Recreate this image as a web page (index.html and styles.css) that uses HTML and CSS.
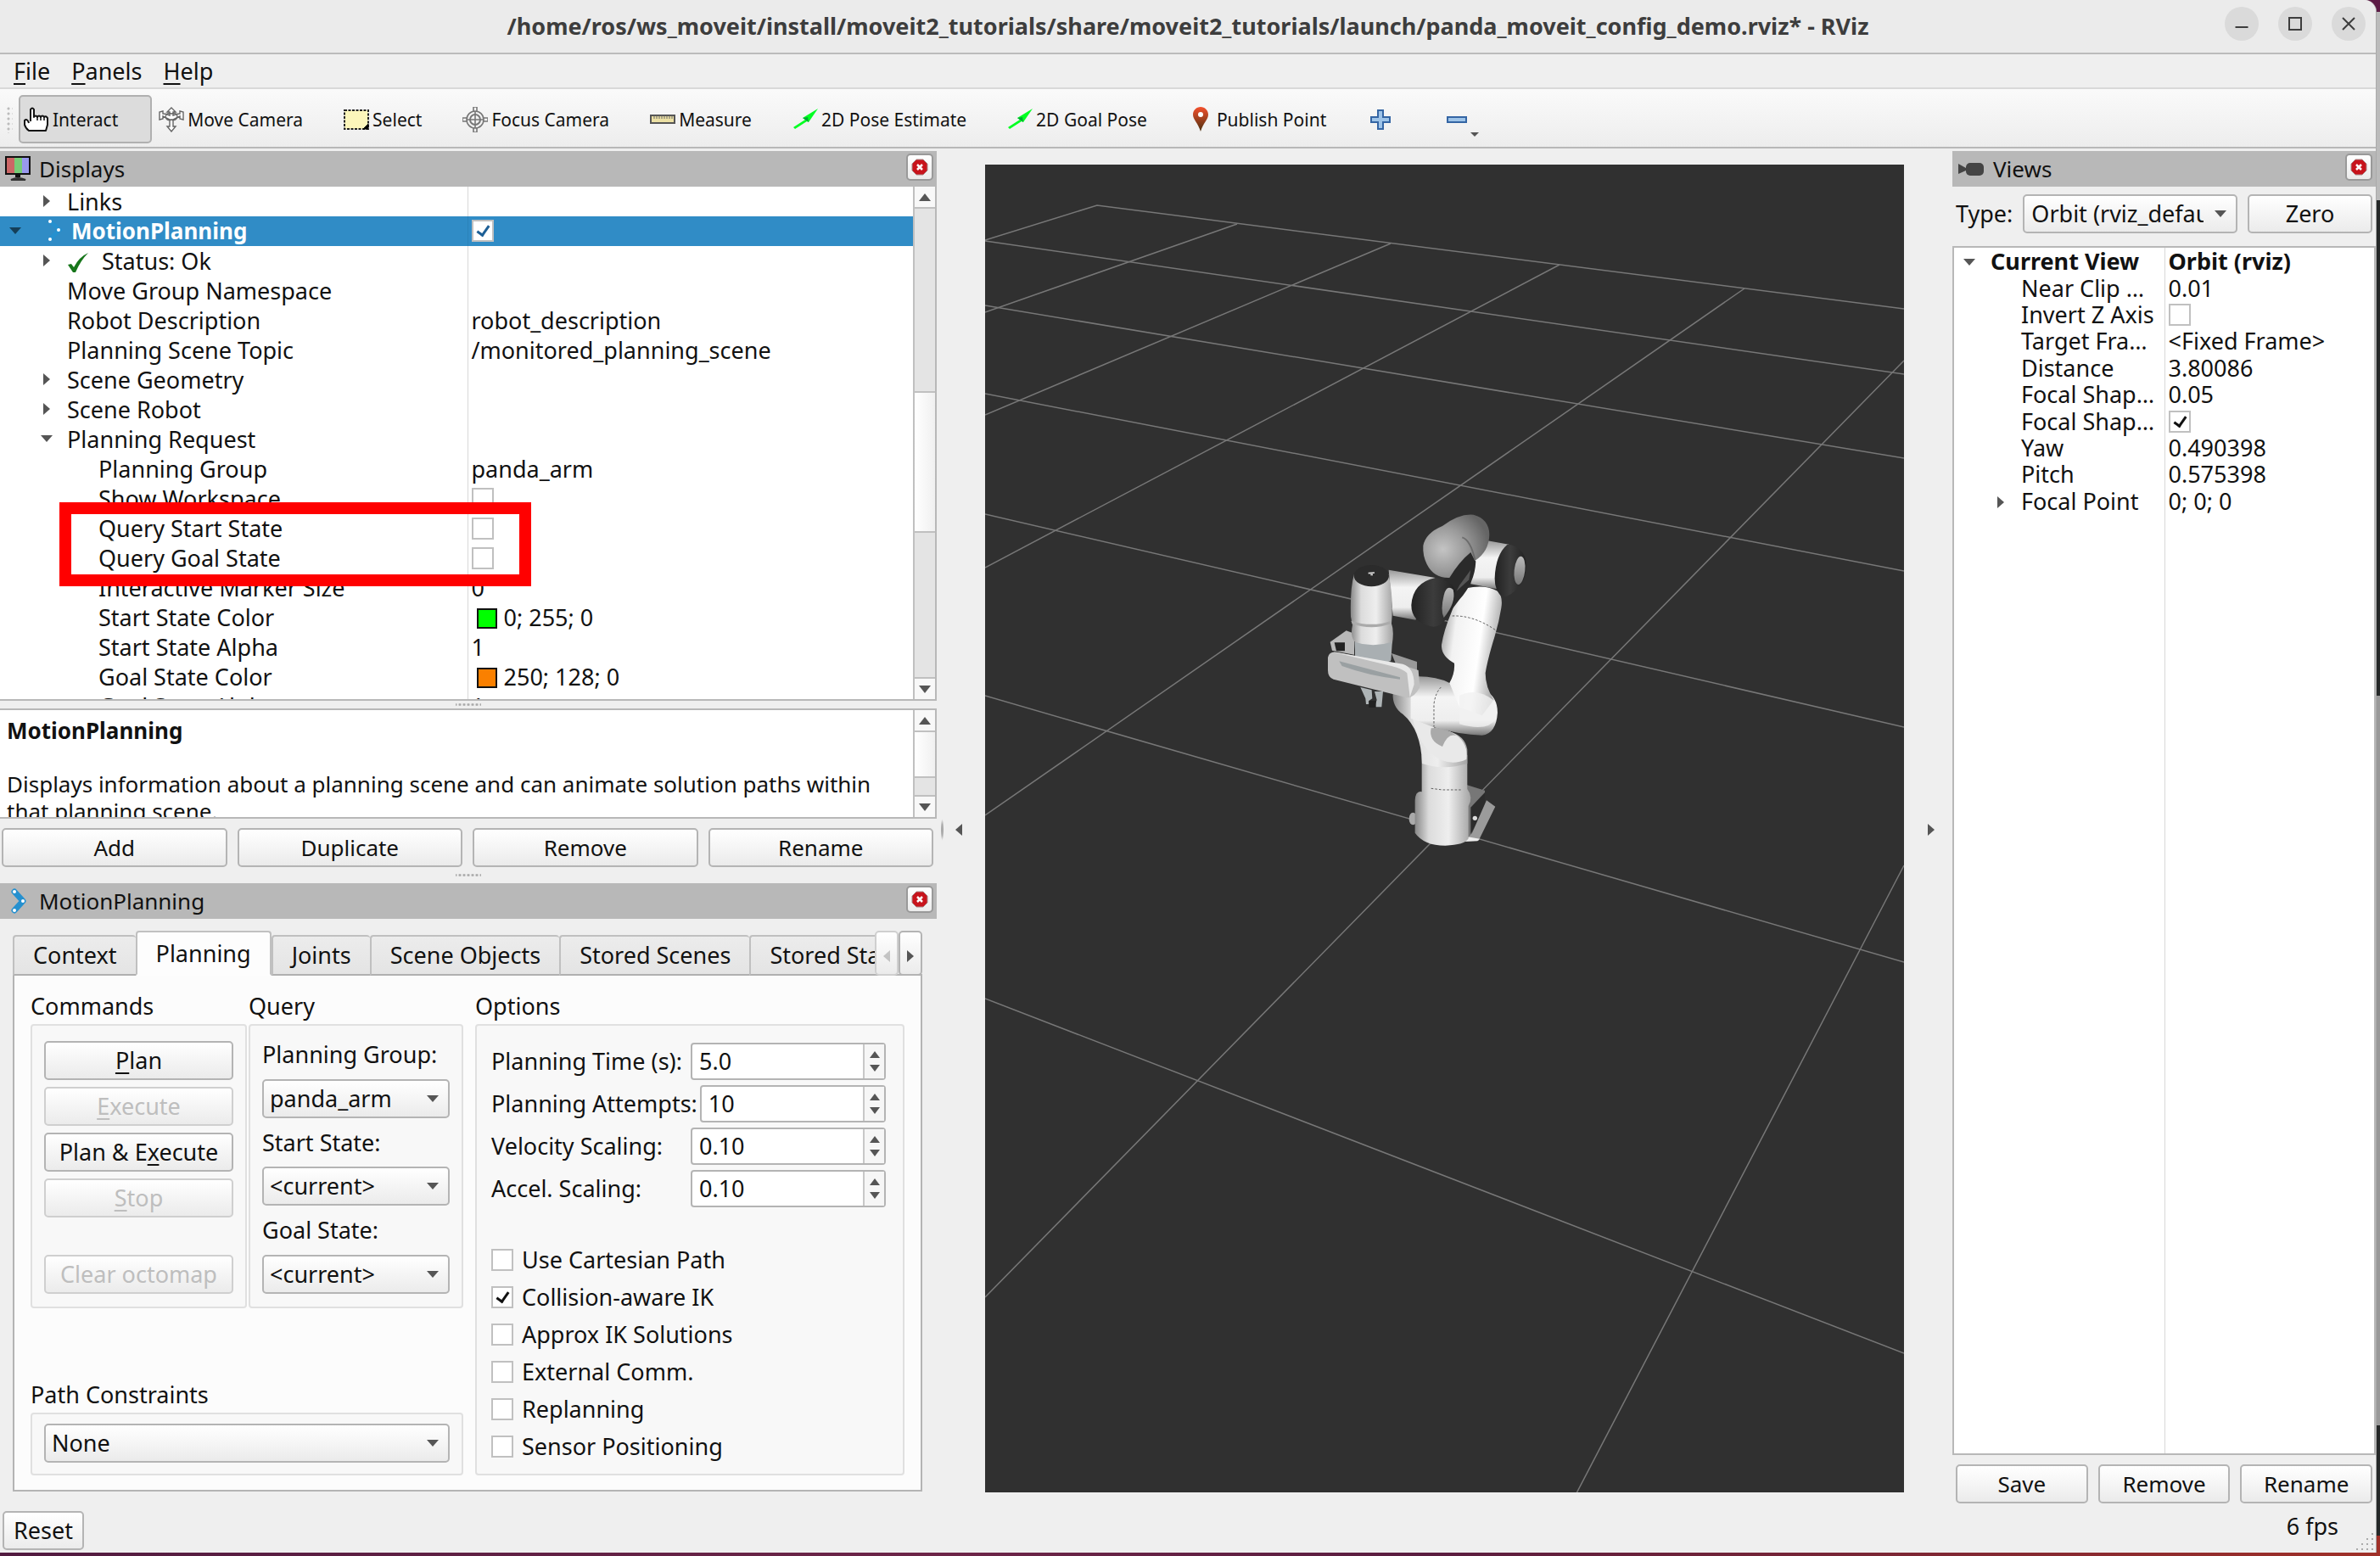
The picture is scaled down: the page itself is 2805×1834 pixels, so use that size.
FILE: index.html
```html
<!DOCTYPE html>
<html lang="en">
  <head>
    <meta charset="UTF-8" />
    <title>RViz</title>
    <link rel="stylesheet" href="styles.css">
  </head>
  <body>
    <div class="window">
      <header class="titlebar">
        <h1>/home/ros/ws_moveit/install/moveit2_tutorials/share/moveit2_tutorials/launch/panda_moveit_config_demo.rviz* - RViz</h1>
        <div class="window-buttons">
          <button aria-label="Minimize"><svg width="16" height="16" viewBox="0 0 16 16"><path d="M0.500 12H15.500" /></svg></button>
          <button aria-label="Maximize"><svg width="16" height="16" viewBox="0 0 16 16"><path d="M1 1H15V15H1Z" /></svg></button>
          <button aria-label="Close"><svg width="16" height="16" viewBox="0 0 16 16"><path d="M1 1L15 15M15 1L1 15" /></svg></button>
        </div>
      </header>

      <nav class="menubar">
        <a href="#"><u>F</u>ile</a>
        <a href="#"><u>P</u>anels</a>
        <a href="#"><u>H</u>elp</a>
      </nav>

      <div class="toolbar">
        <span class="toolbar-grip"></span>
        <button class="tool active">
          <svg width="30" height="30" viewBox="0 0 30 30"><path d="M8 17V3Q10 0 12 3V12Q14 9 16 12Q18 9 20 12Q22 9 24 12Q26 10 28 13V21L26 28H6Q2 25 1 21V16Q4 13 6 19" fill="#fff" stroke="#111" stroke-width="2" stroke-linejoin="round" /><path d="M16 12V16M20 12V16M24 12V16" stroke="#111" stroke-width="1.500" /></svg>
          Interact
        </button>
        <button class="tool">
          <svg width="30" height="30" viewBox="0 0 30 30" fill="#fff" stroke="#666" stroke-width="1.400"><path d="M15 1L20 6H17V10Q22 8 25 8V5L29 6V15L25 14V11Q21 13 17 15V23H20L15 29L10 23H13V15Q9 13 5 11V14L1 15V6L5 5V8Q9 8 13 10V6H10Z" /><path d="M8 12Q9 6 15 8Q22 6 22 12Q20 17 15 15Q10 17 8 12" fill="none" /></svg>
          Move Camera
        </button>
        <button class="tool">
          <svg width="30" height="30" viewBox="0 0 30 30"><path d="M1 4H29V26H1Z" fill="#fcf6bb" stroke="#222" stroke-width="2" stroke-dasharray="3 1.500" /><path d="M29 20V26H23Z" fill="#000" stroke="#000" /></svg>
          Select
        </button>
        <button class="tool">
          <svg width="30" height="30" viewBox="0 0 30 30" fill="none" stroke="#777" stroke-width="1.600"><circle cx="15" cy="15" r="10" /><circle cx="15" cy="15" r="6" stroke-width="2" /><path d="M13 5V0H17V5M13 25V30H17V25M5 13H0V17H5M25 13H30V17H25M15 5V25M5 15H25" /></svg>
          Focus Camera
        </button>
        <button class="tool">
          <svg width="30" height="30" viewBox="0 0 30 30"><path d="M1 10H29V19H1Z" fill="#ece0a4" stroke="#555" stroke-width="2" /><path d="M5 10V14M8 10V14M11 10V14M14 10V14M17 10V14M20 10V14M23 10V14M26 10V14" stroke="#666" stroke-width="1" /></svg>
          Measure
        </button>
        <button class="tool">
          <svg width="30" height="30" viewBox="0 0 30 30"><path d="M30 2L12 13L15 15L1 24L3 26L17 17L19 18Z" fill="#0f2" /><path d="M12 13L19 18L18 12Z" fill="#0a3" /></svg>
          2D Pose Estimate
        </button>
        <button class="tool">
          <svg width="30" height="30" viewBox="0 0 30 30"><path d="M30 2L12 13L15 15L1 24L3 26L17 17L19 18Z" fill="#0f2" /><path d="M12 13L19 18L18 12Z" fill="#0a3" /></svg>
          2D Goal Pose
        </button>
        <button class="tool">
          <svg width="30" height="30" viewBox="0 0 30 30">
            <linearGradient id="pin" x2="0" y2="1"><stop offset="0" stop-color="#f4502c" /><stop offset="1" stop-color="#4a3010" /></linearGradient>
            <path d="M15 0C10 0 6 4 6 9C6 15 12 19 15 29C18 19 24 15 24 9C24 4 20 0 15 0" fill="url(#pin)" /><circle cx="15" cy="9" r="3" fill="#fff" />
          </svg>
          Publish Point
        </button>
        <button class="tool small" aria-label="Add tool"><svg width="24" height="24" viewBox="0 0 24 24"><path d="M9 1H15V9H23V15H15V23H9V15H1V9H9Z" fill="#9dc3e8" stroke="#3465a4" stroke-width="2" /></svg></button>
        <button class="tool small drop" aria-label="Remove tool"><svg width="24" height="24" viewBox="0 0 24 24"><path d="M1 9H23V15H1Z" fill="#9dc3e8" stroke="#3465a4" stroke-width="2" /></svg></button>
      </div>

      <main class="workspace">
        <div class="left-column">
          <section class="dock displays">
            <h2 class="dock-title">
              <svg width="30" height="30" viewBox="0 0 30 30"><path d="M2 2H11V21H2Z" fill="#c66" /><path d="M11 2H20V21H11Z" fill="#7c7" /><path d="M20 2H29V21H20Z" fill="#99e" /><path d="M1 1H29V21H1Z" fill="none" stroke="#111" stroke-width="2" /><path d="M12 22H18V25H12Z" fill="#111" /><path d="M7 28Q15 24 24 28Z" stroke="#333" stroke-width="2" /></svg>
              Displays
              <button class="dock-close" aria-label="Close"><svg width="20" height="20" viewBox="0 0 20 20"><path d="M6 1H14L19 6V14L14 19H6L1 14V6Z" fill="#c8141c" stroke="#a88" /><path d="M7 7L13 13M13 7L7 13" stroke="#fff" stroke-width="2.500" /></svg></button>
            </h2>
            <div class="scroll-area tree-area">
              <table class="tree">
                <tr><td class="level-1"><i class="arrow right"></i>Links</td><td></td></tr>
                <tr class="selected"><td class="level-0"><i class="arrow down"></i><svg width="30" height="30" viewBox="0 0 30 30" fill="#fff"><path d="M11 4L22 14L11 25" fill="none" stroke="#2590cf" stroke-width="5" /><circle cx="11" cy="4" r="2" /><circle cx="21" cy="14" r="2" /><circle cx="11" cy="25" r="2" /></svg>MotionPlanning</td><td><input type="checkbox" aria-label="MotionPlanning" checked /></td></tr>
                <tr><td class="level-1"><i class="arrow right"></i><svg width="26" height="26" viewBox="0 0 26 26"><path d="M1 15L5 14L8 18Q14 6 25 1Q16 10 10 24H7Z" fill="#17761b" /></svg><span class="status">Status: Ok</span></td><td></td></tr>
                <tr><td class="level-1">Move Group Namespace</td><td></td></tr>
                <tr><td class="level-1">Robot Description</td><td>robot_description</td></tr>
                <tr><td class="level-1">Planning Scene Topic</td><td>/monitored_planning_scene</td></tr>
                <tr><td class="level-1"><i class="arrow right"></i>Scene Geometry</td><td></td></tr>
                <tr><td class="level-1"><i class="arrow right"></i>Scene Robot</td><td></td></tr>
                <tr><td class="level-1"><i class="arrow down"></i>Planning Request</td><td></td></tr>
                <tr><td class="level-2">Planning Group</td><td>panda_arm</td></tr>
                <tr><td class="level-2">Show Workspace</td><td><input type="checkbox" aria-label="Show Workspace" /></td></tr>
                <tr><td class="level-2">Query Start State</td><td><input type="checkbox" aria-label="Query Start State" /></td></tr>
                <tr><td class="level-2">Query Goal State</td><td><input type="checkbox" aria-label="Query Goal State" /></td></tr>
                <tr><td class="level-2">Interactive Marker Size</td><td>0</td></tr>
                <tr><td class="level-2">Start State Color</td><td><i class="swatch green"></i>0; 255; 0</td></tr>
                <tr><td class="level-2">Start State Alpha</td><td>1</td></tr>
                <tr><td class="level-2">Goal State Color</td><td><i class="swatch orange"></i>250; 128; 0</td></tr>
                <tr><td class="level-2">Goal State Alpha</td><td>1</td></tr>
              </table>
              <div class="scrollbar">
                <i class="scroll-button up"></i>
                <i class="scroll-track before"></i>
                <i class="scroll-thumb"></i>
                <i class="scroll-track"></i>
                <i class="scroll-button down"></i>
              </div>
              <div class="highlight"></div>
            </div>
            <div class="splitter"></div>
            <div class="scroll-area help-area">
              <div class="help-text">
                <h3>MotionPlanning</h3>
                <p>Displays information about a planning scene and can animate solution paths within that planning scene.</p>
              </div>
              <div class="scrollbar">
                <i class="scroll-button up"></i>
                <i class="scroll-thumb fill"></i>
                <i class="scroll-track short"></i>
                <i class="scroll-button down"></i>
              </div>
            </div>
            <div class="button-row">
              <button>Add</button>
              <button>Duplicate</button>
              <button>Remove</button>
              <button>Rename</button>
            </div>
          </section>

          <div class="splitter dock-splitter"></div>

          <section class="dock motion-planning">
            <h2 class="dock-title">
              <svg width="30" height="30" viewBox="0 0 30 30"><path d="M11 4L21 15L11 26" fill="none" stroke="#2590cf" stroke-width="7" stroke-linejoin="round" stroke-linecap="round" /><g fill="#fff"><circle cx="11" cy="4" r="2" /><circle cx="21" cy="15" r="2" /><circle cx="11" cy="26" r="2" /></g></svg>
              MotionPlanning
              <button class="dock-close" aria-label="Close"><svg width="20" height="20" viewBox="0 0 20 20"><path d="M6 1H14L19 6V14L14 19H6L1 14V6Z" fill="#c8141c" stroke="#a88" /><path d="M7 7L13 13M13 7L7 13" stroke="#fff" stroke-width="2.500" /></svg></button>
            </h2>
            <div class="tab-bar">
              <div class="tabs">
                <button>Context</button>
                <button class="current">Planning</button>
                <button>Joints</button>
                <button>Scene Objects</button>
                <button>Stored Scenes</button>
                <button>Stored States</button>
              </div>
              <button class="tab-scroll" aria-label="Previous tabs" disabled><i class="arrow left"></i></button>
              <button class="tab-scroll" aria-label="Next tabs"><i class="arrow right"></i></button>
            </div>
            <div class="tab-pane">
              <section class="commands">
                <h3>Commands</h3>
                <div class="group">
                  <button><u>P</u>lan</button>
                  <button disabled><u>E</u>xecute</button>
                  <button>Plan &amp; E<u>x</u>ecute</button>
                  <button disabled><u>S</u>top</button>
                  <button class="clear" disabled>Clear octomap</button>
                </div>
              </section>
              <section class="query">
                <h3>Query</h3>
                <div class="group">
                  <label for="planning-group">Planning Group:</label>
                  <span class="select"><select id="planning-group"><option>panda_arm</option></select></span>
                  <label for="start-state">Start State:</label>
                  <span class="select"><select id="start-state"><option>&lt;current&gt;</option></select></span>
                  <label for="goal-state">Goal State:</label>
                  <span class="select"><select id="goal-state"><option>&lt;current&gt;</option></select></span>
                </div>
              </section>
              <section class="path">
                <h3><label for="path-constraints">Path Constraints</label></h3>
                <div class="group">
                  <span class="select"><select id="path-constraints"><option>None</option></select></span>
                </div>
              </section>
              <section class="options">
                <h3>Options</h3>
                <div class="group">
                  <div class="field">
                    <label for="planning-time">Planning Time (s):</label>
                    <span class="spin"><input type="number" id="planning-time" value="5.0" step="0.1" /><span class="spin-buttons"><i></i><i></i></span></span>
                  </div>
                  <div class="field">
                    <label for="attempts">Planning Attempts:</label>
                    <span class="spin"><input type="number" id="attempts" value="10" /><span class="spin-buttons"><i></i><i></i></span></span>
                  </div>
                  <div class="field">
                    <label for="velocity">Velocity Scaling:</label>
                    <span class="spin"><input type="number" id="velocity" value="0.10" step="0.01" /><span class="spin-buttons"><i></i><i></i></span></span>
                  </div>
                  <div class="field">
                    <label for="accel">Accel. Scaling:</label>
                    <span class="spin"><input type="number" id="accel" value="0.10" step="0.01" /><span class="spin-buttons"><i></i><i></i></span></span>
                  </div>
                  <div class="checks">
                    <label><input type="checkbox" />Use Cartesian Path</label>
                    <label><input type="checkbox" checked />Collision-aware IK</label>
                    <label><input type="checkbox" />Approx IK Solutions</label>
                    <label><input type="checkbox" />External Comm.</label>
                    <label><input type="checkbox" />Replanning</label>
                    <label><input type="checkbox" />Sensor Positioning</label>
                  </div>
                </div>
              </section>
            </div>
          </section>
        </div>

        <div class="gutter dotted-left"><i class="arrow left"></i></div>

        <div class="viewport">
          <svg viewBox="0 0 1083 1567" preserveAspectRatio="xMidYMid slice">
            <defs>
              <linearGradient id="column"><stop offset="0" stop-color="#888" /><stop offset=".25" stop-color="#dcdcdc" /><stop offset=".6" stop-color="#eee" /><stop offset="1" stop-color="#a4a4a4" /></linearGradient>
              <linearGradient id="arm" x1="0" y1="0" x2="1" y2=".3"><stop offset="0" stop-color="#888" /><stop offset=".3" stop-color="#f2f2f2" /><stop offset=".7" stop-color="#fff" /><stop offset="1" stop-color="#aaa" /></linearGradient>
              <linearGradient id="tube" x1="0" y1="0" x2="0" y2="1"><stop offset="0" stop-color="#999" /><stop offset=".35" stop-color="#f4f4f4" /><stop offset=".75" stop-color="#eee" /><stop offset="1" stop-color="#777" /></linearGradient>
              <radialGradient id="head" cx=".3" cy=".55" r=".7"><stop offset="0" stop-color="#c4c4c4" /><stop offset=".5" stop-color="#9a9a9a" /><stop offset="1" stop-color="#656565" /></radialGradient>
              <linearGradient id="band"><stop offset="0" stop-color="#222" /><stop offset=".5" stop-color="#3c3c3c" /><stop offset="1" stop-color="#222" /></linearGradient>
              <linearGradient id="cap" x2="0" y2="1"><stop offset="0" stop-color="#bbb" /><stop offset="1" stop-color="#777" /></linearGradient>
            </defs>
            <!-- ground grid -->
            <g stroke="#777" stroke-width="1.500" fill="none">
              <path d="M0 90L132 49L1083 171M0 91L1083 248M0 167L1083 347M0 271L1083 480M0 413L1083 664M0 627L1083 941M0 984L1083 1402" />
              <path d="M0 175L297 71M0 296L478 94M0 476L677 119M0 768L895 147M0 1336L1083 232M697 1567L1083 827" />
            </g>
            <!-- panda arm -->
            <g transform="translate(359 387) scale(.3333)">
              <ellipse cx="436" cy="1155" rx="14" ry="22" fill="#aaa" />
              <path d="M625 1035L690 1055V1095L640 1215H620Z" fill="#777" />
              <path d="M640 1115L690 1062V1120L640 1210Z" fill="#2c2c2c" />
              <path d="M696 1090L727 1112L668 1232L625 1230L645 1205Z" fill="#9b9b9b" />
              <path d="M625 1218L672 1226L664 1234L620 1236Z" fill="#eee" />
              <circle cx="655" cy="1153" r="8" fill="#ddd" />
              <path d="M467 930V1060Q445 1055 443 1090V1205Q475 1250 550 1250Q620 1248 632 1225V1110Q650 1080 628 1050V930Z" fill="url(#column)" />
              <path d="M365 710Q362 760 400 785Q465 840 468 960Q545 985 628 960V910Q620 860 560 845L500 830V660Z" fill="url(#column)" />
              <path d="M430 730Q425 850 500 925Q560 975 625 945Q632 890 590 860Q550 835 510 835L520 740Z" fill="#e9e9e9" />
              <path d="M500 835Q490 880 540 900Q560 850 590 862Q550 830 500 835" fill="#aaa" />
              <path d="M455 652Q520 652 565 675L690 700Q735 725 735 780Q730 855 680 860Q600 858 510 832L428 800V725Z" fill="url(#tube)" />
              <path d="M625 340Q690 325 735 350Q755 370 748 410Q740 460 725 510Q700 590 692 640Q692 690 722 735L680 790L600 760L565 675Q585 640 582 605Q535 580 537 540Q545 490 570 430Q590 370 625 340Z" fill="url(#arm)" />
              <path d="M600 720Q660 690 720 735Q735 760 730 800Q700 850 600 820Z" fill="#f1f1f1" opacity=".8" />
              <path d="M575 438Q650 435 728 488M535 690Q515 710 510 750V830M500 1048L540 1053H605" fill="none" stroke="#444" stroke-width="2.500" stroke-dasharray="8 6" />
              <path d="M700 172L775 185L745 345L640 325L650 240Z" fill="url(#tube)" />
              <path d="M770 185Q820 190 835 240Q840 300 815 330Q780 372 752 370Q725 350 725 305Q728 220 770 185" fill="url(#band)" />
              <ellipse cx="813" cy="277" rx="19" ry="50" fill="url(#cap)" transform="rotate(6 813 277)" />
              <path d="M350 275L515 303L445 452L365 437Z" fill="url(#tube)" />
              <path d="M640 213L658 245Q655 320 600 380L570 420L545 310Z" fill="#2a2a2a" />
              <path d="M600 330L640 275L634 310L590 350Z" fill="#555" />
              <path d="M515 303Q580 315 585 350Q585 400 560 440Q530 482 500 475Q430 460 430 400Q435 320 515 303" fill="url(#band)" />
              <path d="M545 365Q555 325 578 345Q590 390 545 444Q532 420 545 365" fill="url(#cap)" />
              <path d="M472 190Q480 145 540 120Q600 75 650 80Q705 95 706 150Q705 210 655 243L640 213Q600 245 565 303Q510 305 485 255Q470 225 472 190" fill="url(#head)" />
              <path d="M610 160Q640 170 655 240" fill="none" stroke="#5c5c5c" stroke-width="6" opacity=".7" />
              <!-- gripper -->
              <path d="M143 530L200 490L228 500V575L150 560Z" fill="#b8b8b8" />
              <path d="M158 532H195V562H165Z" fill="#222" />
              <path d="M360 570L450 600V650L380 620Z" fill="#999" />
              <path d="M228 290Q213 340 216 440L222 470Q213 510 230 530L232 590Q290 625 358 595L362 540Q370 490 360 465Q368 380 350 290Z" fill="url(#column)" />
              <path d="M230 530Q295 552 360 530L357 598Q290 620 232 590Z" fill="#a9afb2" />
              <path d="M217 455Q290 480 360 455V465Q290 490 221 466Z" fill="#aaa" />
              <ellipse cx="289" cy="296" rx="62" ry="38" fill="#2b2b2b" />
              <path d="M278 287L300 285M286 292H294" stroke="#ddd" stroke-width="5" />
              <path d="M135 585Q140 558 175 568L400 612L455 630L460 690Q440 728 415 727L155 662Q135 655 135 630Z" fill="#c0c0c0" />
              <path d="M150 565L400 608Q440 620 440 680L425 725L415 640Q400 625 360 615Z" fill="#e8e8e8" />
              <path d="M175 598L390 655V662Q280 650 185 615Z" fill="#9aa0a2" />
              <path d="M250 690L290 700L292 730L280 738V750H270L268 730ZM300 705L330 705L325 760H300L308 735Z" fill="#aeb4b6" />
              <path d="M280 738H305V762H280Z" fill="#222" />
            </g>
          </svg>
        </div>

        <div class="gutter dotted-right"><i class="arrow right"></i></div>

        <section class="dock views">
          <h2 class="dock-title">
            <svg width="32" height="30" viewBox="0 0 32 30" fill="#444"><path d="M1 9L10 14V17L1 21Z" /><rect x="10" y="8" width="21" height="15" rx="5" /></svg>
            Views
            <button class="dock-close" aria-label="Close"><svg width="20" height="20" viewBox="0 0 20 20"><path d="M6 1H14L19 6V14L14 19H6L1 14V6Z" fill="#c8141c" stroke="#a88" /><path d="M7 7L13 13M13 7L7 13" stroke="#fff" stroke-width="2.500" /></svg></button>
          </h2>
          <div class="type-row">
            <label for="view-type">Type:</label>
            <span class="select"><select id="view-type"><option>Orbit (rviz_default_plugins)</option></select></span>
            <button>Zero</button>
          </div>
          <div class="views-tree">
            <table class="tree">
              <tr class="current-view"><td><i class="arrow down"></i>Current View</td><td>Orbit (rviz)</td></tr>
              <tr><td>Near Clip …</td><td>0.01</td></tr>
              <tr><td>Invert Z Axis</td><td><input type="checkbox" aria-label="Invert Z Axis" /></td></tr>
              <tr><td>Target Fra…</td><td>&lt;Fixed Frame&gt;</td></tr>
              <tr><td>Distance</td><td>3.80086</td></tr>
              <tr><td>Focal Shap…</td><td>0.05</td></tr>
              <tr><td>Focal Shap…</td><td><input type="checkbox" aria-label="Focal Shape Fixed Size" checked /></td></tr>
              <tr><td>Yaw</td><td>0.490398</td></tr>
              <tr><td>Pitch</td><td>0.575398</td></tr>
              <tr><td><i class="arrow right"></i>Focal Point</td><td>0; 0; 0</td></tr>
            </table>
          </div>
          <div class="button-row">
            <button>Save</button>
            <button>Remove</button>
            <button>Rename</button>
          </div>
        </section>
      </main>

      <footer class="statusbar">
        <button>Reset</button>
        <span class="fps">6 fps</span>
        <svg class="size-grip" width="20" height="20" viewBox="0 0 20 20"><path d="M18 1h2M12 7h2M18 7h2M6 13h2M12 13h2M18 13h2M0 19h2M6 19h2M12 19h2M18 19h2" stroke="#aaa" stroke-width="2" /></svg>
      </footer>
    </div>
  </body>
</html>
```
FILE: styles.css
```css
* {
  box-sizing: border-box;
}

body {
  margin: 0;
  height: 100vh;
  padding: 0 4px 4px 0;
  overflow: hidden;
  font-family: "Noto Sans", sans-serif;
  font-size: 27px;
  line-height: 32px;
  color: #111;
  background:
    linear-gradient(90deg, #521b40, #6d2548 40%, #5a1d40 60%, #a03028) bottom / 100% 4px no-repeat,
    linear-gradient(#5c1a45 14px, #bbb 14px, #bbb 236px, #252828 236px, #252828 820px, #999 820px, #999 1680px, #252828 1680px, #252828 1810px, #a03028 1810px);
}

h1,
h2,
h3,
p {
  margin: 0;
  font-size: inherit;
  font-weight: normal;
}

button,
input,
select {
  font: inherit;
  color: inherit;
}

button,
select {
  height: 46px;
  padding: 0;
  border: 2px solid #b4b4b4;
  border-radius: 5px;
  background: linear-gradient(#fff, #ebebeb);
}

button:disabled {
  color: #bebebe;
  border-color: #cfcfcf;
}

u {
  text-underline-offset: 4px;
  text-decoration-thickness: 2px;
}

.window {
  display: flex;
  flex-direction: column;
  height: 100%;
  background: #efefef;
  border-right: 1px solid #aaa;
  border-top-right-radius: 14px;
}

.titlebar {
  position: relative;
  display: flex;
  align-items: center;
  justify-content: center;
  height: 64px;
  flex: none;
  background: #ebebeb;
  border-bottom: 2px solid #bbb;
  border-top-right-radius: 14px;
}

.titlebar h1 {
  font-weight: bold;
  color: #3d3d3d;
}

.window-buttons {
  position: absolute;
  right: 12px;
  top: 8px;
  display: flex;
  gap: 23px;
}

.window-buttons button {
  width: 40px;
  height: 40px;
  border: 0;
  border-radius: 50%;
  background: #dadada;
}

.window-buttons svg {
  display: block;
  margin: auto;
  fill: none;
  stroke: #3d3d3d;
  stroke-width: 2;
}

.menubar {
  display: flex;
  align-items: center;
  gap: 25px;
  height: 41px;
  flex: none;
  padding-left: 16px;
  border-bottom: 2px solid #d8d8d8;
}

.menubar a {
  color: inherit;
  text-decoration: none;
}

.toolbar {
  display: flex;
  align-items: center;
  gap: 2px;
  height: 70px;
  flex: none;
  padding: 3px 0 0 7px;
  font-size: 21px;
  background: linear-gradient(#fafafa, #ededed);
  border-bottom: 2px solid #b8b8b8;
}

.toolbar-grip {
  width: 13px;
  height: 32px;
  background: radial-gradient(#bbb 1px, transparent 2px) 0 0 / 6px 6px;
  background-clip: content-box;
  padding-right: 5px;
}

.tool {
  display: flex;
  align-items: center;
  gap: 4px;
  height: 57px;
  padding: 0 38px 0 4px;
  border-color: transparent;
  background: none;
}

.tool.active {
  background: #dcdcdc;
  border-color: #b0b0b0;
}

.tool.small {
  position: relative;
  padding: 0 30px 0 8px;
}

.tool.drop {
  margin-left: 22px;
}

.tool.drop::after {
  content: "";
  position: absolute;
  right: 16px;
  bottom: 6px;
  border: 5px solid transparent;
  border-top-color: #555;
  border-bottom: 0;
}

.workspace {
  display: grid;
  grid-template-columns: 1104px 57px 1fr 57px 499px;
  flex: 1;
  min-height: 0;
  padding-top: 3px;
}

.left-column {
  display: flex;
  flex-direction: column;
  min-height: 0;
}

.dock {
  display: flex;
  flex-direction: column;
  min-height: 0;
}

.displays {
  flex: 1;
}

.dock-title {
  display: flex;
  align-items: center;
  gap: 10px;
  height: 42px;
  flex: none;
  padding: 0 4px 0 6px;
  font-size: 26px;
  background: #b8b8b8;
}

.dock-close {
  width: 32px;
  height: 32px;
  margin-left: auto;
  margin-bottom: 4px;
  border-color: #999;
}

.dock-close svg {
  display: block;
  margin: auto;
}

.scroll-area {
  position: relative;
  display: flex;
  overflow: hidden;
  background: #fff;
  border: 2px solid #b8b8b8;
  border-width: 0 2px 2px 0;
}

.tree-area {
  flex: 1;
  align-items: flex-start;
}

.tree {
  flex: 1;
  border-collapse: collapse;
  table-layout: fixed;
}

.tree td {
  position: relative;
  height: 35px;
  padding: 0 0 0 4px;
  line-height: 35px;
  white-space: nowrap;
}

.tree td + td {
  border-left: 1px solid #d8d8d8;
}

.tree svg {
  vertical-align: -5px;
}

.tree-area td:first-child {
  width: 551px;
}

.tree .level-0 {
  padding-left: 48px;
}

.tree .level-1 {
  padding-left: 79px;
}

.tree .level-2 {
  padding-left: 116px;
}

.tree .selected {
  background: #308cc6;
  color: #fff;
  font-size: 26px;
  font-weight: bold;
}

.tree .selected td {
  border-color: #2a82ba;
}

.tree .selected svg {
  margin-right: 6px;
}

.status {
  margin-left: 15px;
}

.arrow {
  display: inline-block;
  border: 7px solid transparent;
}

.arrow.right {
  border-left: 8px solid #555;
  border-right: 0;
}

.arrow.left {
  border-right: 8px solid #555;
  border-left: 0;
}

.arrow.down {
  border-top: 8px solid #555;
  border-bottom: 0;
}

.tree .arrow {
  position: absolute;
  left: 51px;
  top: 10px;
}

.tree .arrow.down {
  left: 48px;
  top: 13px;
}

.tree .level-0 .arrow.down {
  left: 11px;
  border-top-color: #153f59;
}

.swatch {
  display: inline-block;
  width: 24px;
  height: 24px;
  margin: 0 8px 0 6px;
  border: 2px solid #111;
  vertical-align: -3px;
}

.green {
  background: #00ff00;
}

.orange {
  background: #fa8000;
}

input[type="checkbox"] {
  appearance: none;
  position: relative;
  width: 26px;
  height: 26px;
  margin: 0;
  flex: none;
  vertical-align: -3px;
  background: #fff;
  border: 2px solid #c0c0c0;
}

input[type="checkbox"]:checked::after {
  content: "";
  position: absolute;
  left: 7px;
  top: 2px;
  width: 6px;
  height: 12px;
  border: solid #111;
  border-width: 0 3px 3px 0;
  transform: rotate(35deg);
}

.selected input[type="checkbox"]:checked::after {
  border-color: #1d5f96;
}

.highlight {
  position: absolute;
  left: 70px;
  top: 372px;
  width: 556px;
  height: 99px;
  border: 14px solid #ff0000;
}

.scrollbar {
  display: flex;
  flex-direction: column;
  align-self: stretch;
  width: 26px;
  flex: none;
  border-left: 2px solid #c0c0c0;
  background: #e4e4e4;
}

.scroll-button {
  height: 26px;
  background: #f8f8f8;
}

.scroll-button::after {
  content: "";
  display: block;
  width: 0;
  margin: 8px auto;
  border: 7px solid transparent;
}

.scroll-button.up {
  border-bottom: 2px solid #c0c0c0;
}

.scroll-button.up::after {
  border-bottom: 9px solid #555;
  border-top: 0;
}

.scroll-button.down {
  border-top: 2px solid #c0c0c0;
}

.scroll-button.down::after {
  border-top: 9px solid #555;
  border-bottom: 0;
}

.scroll-track {
  flex: 172;
}

.scroll-track.before {
  flex: 218;
}

.scroll-track.short {
  flex: none;
  height: 20px;
}

.scroll-thumb {
  flex: 166;
  background: linear-gradient(90deg, #fff, #f0f0f0);
  border: solid #c0c0c0;
  border-width: 2px 0;
}

.scroll-thumb.fill {
  flex: 1;
  border-top: 0;
}

.splitter {
  height: 9px;
  flex: none;
  background: radial-gradient(#aaa 1px, transparent 2px) center / 5px 5px;
  background-clip: content-box;
  padding: 2px 537px;
}

.dock-splitter {
  height: 19px;
  padding: 8px 537px 6px;
}

.help-area {
  height: 130px;
  flex: none;
  border-width: 2px 2px 2px 0;
}

.help-text {
  flex: 1;
  padding: 8px 8px 0;
  font-size: 26px;
}

.help-text h3 {
  margin-bottom: 31px;
  font-weight: bold;
}

.button-row {
  display: flex;
  gap: 12px;
  padding: 11px 4px 0 2px;
  font-size: 26px;
}

.button-row button {
  flex: 1;
}

.tab-bar {
  position: relative;
  z-index: 1;
  display: flex;
  align-items: flex-end;
  height: 67px;
  padding: 0 17px 0 15px;
}

.tabs {
  display: flex;
  align-items: flex-end;
  flex: 1;
  min-width: 0;
  overflow: hidden;
}

.tabs button {
  flex: none;
  height: 48px;
  padding: 0 22px;
  border-right-width: 0;
  border-color: #c0c0c0;
  border-bottom-color: #b0b0b0;
  border-radius: 4px 4px 0 0;
  background: linear-gradient(#ececec, #e4e4e4);
}

.tabs .current {
  height: 53px;
  border-right-width: 2px;
  border-bottom-color: #fdfdfd;
  background: #fdfdfd;
}

.tab-scroll {
  width: 28px;
  height: 53px;
  flex: none;
}

.tab-scroll:disabled .arrow {
  opacity: 0.3;
}

.tab-pane {
  display: grid;
  grid-template-columns: 255px 253px minmax(0, 1fr);
  grid-template-rows: auto 1fr;
  column-gap: 2px;
  margin: -2px 17px 19px 15px;
  padding: 20px 19px 17px;
  background: #fcfcfc;
  border: 2px solid #b4b4b4;
}

.tab-pane h3 {
  height: 37px;
}

.group {
  padding: 18px 14px 15px;
  background: #f8f8f8;
  border: 2px solid #e0e0e0;
  border-radius: 4px;
}

.commands .group,
.query .group {
  display: flex;
  flex-direction: column;
  height: 335px;
}

.commands .group {
  gap: 8px;
}

.commands .clear {
  margin-top: auto;
}

.query .group {
  justify-content: space-between;
}

.path {
  grid-row: 2;
  grid-column: 1 / 3;
  align-self: end;
}

.path .group {
  padding: 11px 14px 13px;
}

.options {
  display: flex;
  flex-direction: column;
  grid-row: 1 / 3;
  grid-column: 3;
  margin-left: 12px;
}

.options .group {
  flex: 1;
  padding: 20px 20px 16px 17px;
}

.select {
  position: relative;
  display: block;
}

.select select {
  appearance: none;
  display: block;
  width: 100%;
  padding: 0 38px 0 7px;
}

.select::after {
  content: "";
  position: absolute;
  right: 13px;
  top: 19px;
  border: 7px solid transparent;
  border-top: 8px solid #555;
  border-bottom: 0;
  pointer-events: none;
}

.field {
  display: flex;
  align-items: center;
  gap: 3px;
  margin-bottom: 6px;
}

.field label {
  flex: none;
  min-width: 232px;
}

.spin {
  display: flex;
  flex: 1;
  min-width: 0;
  height: 44px;
  background: #fff;
  border: 2px solid #b4b4b4;
  border-radius: 4px;
}

.spin input {
  appearance: textfield;
  flex: 1;
  min-width: 0;
  padding: 0 8px;
  border: 0;
  background: none;
}

.spin-buttons {
  display: flex;
  flex-direction: column;
  align-items: center;
  justify-content: space-around;
  width: 25px;
  padding: 4px 0;
  border-left: 2px solid #c8c8c8;
  background: #f6f6f6;
}

.spin-buttons i {
  border: 6px solid transparent;
  border-bottom: 8px solid #555;
  border-top: 0;
}

.spin-buttons i + i {
  border-top: 8px solid #555;
  border-bottom: 0;
}

.checks {
  display: flex;
  flex-direction: column;
  gap: 12px;
  margin-top: 46px;
}

.checks label {
  display: flex;
  align-items: center;
  gap: 10px;
}

.gutter {
  display: flex;
  align-items: center;
  justify-content: center;
  padding-right: 6px;
}

.dotted-left {
  background: radial-gradient(#aaa 1px, transparent 2px) 4px center / 5px 32px no-repeat;
}

.gutter.dotted-right {
  padding: 0 0 0 6px;
}

.viewport {
  margin: 16px 0 18px;
  min-height: 0;
  background: #303030;
}

.viewport svg {
  display: block;
  width: 100%;
  height: 100%;
}

.type-row {
  display: flex;
  align-items: center;
  gap: 12px;
  padding: 9px 4px 15px;
}

.type-row .select {
  flex: 1;
}

.type-row .select select {
  padding-left: 8px;
}

.type-row button {
  width: 147px;
}

.views-tree {
  flex: 1;
  border: 2px solid #b8b8b8;
  /* column line runs the full height of the view */
  background: linear-gradient(#d8d8d8, #d8d8d8) 248px 0 / 1px 100% no-repeat #fff;
}

.views-tree .tree {
  width: 100%;
  height: 314px;
}

.views-tree .tree td {
  height: auto;
  padding: 0 0 0 79px;
  line-height: 31px;
}

.views-tree .tree td:first-child {
  width: 248px;
}

.views-tree .tree td + td {
  padding-left: 4px;
}

.views-tree .tree .current-view td {
  font-weight: bold;
}

.views-tree .tree .current-view td:first-child {
  padding-left: 43px;
}

.views-tree .tree .arrow.down {
  left: 11px;
}

.views .button-row {
  padding: 11px 4px 5px;
}

.statusbar {
  position: relative;
  display: flex;
  align-items: center;
  justify-content: space-between;
  height: 53px;
  flex: none;
  padding: 0 44px 0 3px;
}

.statusbar button {
  width: 96px;
}

.fps {
  margin-bottom: 10px;
}

.size-grip {
  position: absolute;
  right: 3px;
  bottom: 3px;
}
```
